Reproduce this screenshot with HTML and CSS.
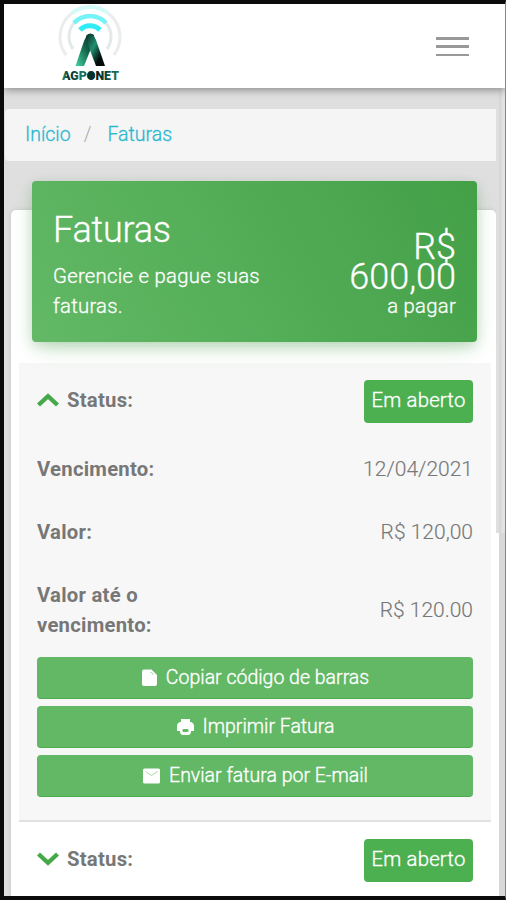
FILE: index.html
```html
<!DOCTYPE html>
<html lang="pt-BR">
<head>
<meta charset="utf-8">
<title>Faturas</title>
<link rel="stylesheet" href="styles.css">
</head>
<body>
<div class="screen">
  <header class="topbar">
    <svg class="logo" width="68" height="78" viewBox="0 0 68 78">
      <defs>
        <linearGradient id="leg" x1="0" y1="1" x2="1" y2="0"><stop offset="0" stop-color="#45d6a5"/><stop offset=".5" stop-color="#166b50"/><stop offset="1" stop-color="#031b16"/></linearGradient>
        <linearGradient id="legDark" x1="0" y1="0" x2="1" y2="1"><stop offset="0" stop-color="#062c25"/><stop offset=".4" stop-color="#238f70"/><stop offset=".75" stop-color="#020b0a"/></linearGradient>
        <linearGradient id="word"><stop offset="0" stop-color="#2aa183"/><stop offset=".15" stop-color="#06231f"/><stop offset=".35" stop-color="#187c65"/><stop offset=".6" stop-color="#041a18"/><stop offset="1" stop-color="#187c65"/></linearGradient>
      </defs>
      <g fill="none" stroke-width="3">
        <path d="M10 51A30 30 0 1 1 58 51" stroke="#eaeded"/>
        <path d="M17 45A21 21 0 1 1 51 45" stroke="#e3e8e8"/>
        <path d="M16 9A30 30 0 0 1 52 9" stroke="#d3fbfa" stroke-width="4"/>
        <path d="M18 19A22 22 0 0 1 50 19" stroke="#76f3f6" stroke-width="4.5"/>
        <path d="M24 26A14 14 0 0 1 44 26" stroke="#30edf5" stroke-width="5"/>
      </g>
      <path d="M28 37L31 31Q34 28 38 31V37L28 62H19.500Z" fill="url(#leg)"/>
      <path d="M30 32Q34 28 38 32L40 36L49 62H40L32 41Z" fill="url(#legDark)"/>
      <text class="wordmark" x="6" y="76" textLength="57" lengthAdjust="spacingAndGlyphs" fill="url(#word)">AGPONET</text>
      <circle cx="35" cy="71.500" r="3.800" fill="#05332c"/>
    </svg>
    <div class="menu"><span></span><span></span><span></span></div>
  </header>
  <div class="body">
    <main class="content">
      <nav class="crumbs"><a>Início</a><i>/</i><a>Faturas</a></nav>
      <section class="card">
        <div class="hero">
          <div class="hero-text"><h1>Faturas</h1><p>Gerencie e pague suas<br>faturas.</p></div>
          <div class="total"><div class="amount">R$<br>600,00</div><p>a pagar</p></div>
        </div>
        <div class="invoice open">
          <div class="row status"><b><svg width="22" height="14" viewBox="0 0 22 14"><path d="M1.500 12L11 3.200L20.500 12"/></svg>Status:</b><span class="badge">Em aberto</span></div>
          <div class="row due"><b>Vencimento:</b><span class="value">12/04/2021</span></div>
          <div class="row"><b>Valor:</b><span class="value">R$ 120,00</span></div>
          <div class="row tall"><b>Valor até o<br>vencimento:</b><span class="value">R$ 120.00</span></div>
          <div class="actions">
            <div class="btn"><svg width="17" height="20" viewBox="0 0 17 20"><path fill="currentColor" d="M3 1.500H10.500L16 7V16Q16 18 14 18H3Q1 18 1 16V3.500Q1 1.500 3 1.500Z"/><path d="M9.500 4.500H11Q12 5 12 7" fill="none" stroke="#a9d9aa"/></svg><span>Copiar código de barras</span></div>
            <div class="btn"><svg width="19" height="20" viewBox="0 0 19 20"><path fill="currentColor" d="M5 2H14V5H5ZM4 5H15Q18 6 18 9V14H15Q15 18 12 18H7Q4 18 4 14H1V9Q1 6 4 5Z"/><rect x="6.500" y="12" width="6" height="3" rx="1" fill="#62b865"/></svg><span>Imprimir Fatura</span></div>
            <div class="btn"><svg width="19" height="20" viewBox="0 0 19 20"><rect x="1" y="2.500" width="17" height="15" rx="1.500" fill="currentColor"/><path d="M3.500 5.500L9.500 9.500L15.500 5.500" fill="none" stroke="#a9d9aa" stroke-width="1"/></svg><span>Enviar fatura por E-mail</span></div>
          </div>
        </div>
        <div class="invoice">
          <div class="row status"><b><svg width="22" height="14" viewBox="0 0 22 14"><path d="M1.500 2L11 10.800L20.500 2"/></svg>Status:</b><span class="badge">Em aberto</span></div>
        </div>
      </section>
    </main>
    <div class="scroll"><div class="thumb"></div></div>
  </div>
</div>
</body>
</html>
```
FILE: styles.css
```css
* { box-sizing: border-box; }
body { margin: 0; font: 300 20.3px/29.5px Roboto, "Liberation Sans", sans-serif; color: #777; }
h1, p { margin: 0; font-weight: inherit; }
.screen { width: 506px; height: 900px; overflow: hidden; display: flex; flex-direction: column; border: solid #0b0b0b; border-width: 4px 1px 4px 4px; border-right-color: #858585; background: #dfdfdf; }
.topbar { position: relative; height: 84px; flex: none; display: flex; justify-content: space-between; align-items: flex-start; padding: 0 36px 0 52px; background: #fff; box-shadow: 0 2px 8px rgba(0,0,0,.38); z-index: 1; }
.logo { display: block; }
.wordmark { font: 900 13px Roboto, sans-serif; }
.menu { display: flex; flex-direction: column; gap: 5.5px; padding-top: 33px; }
.menu span { display: block; width: 33px; height: 2.8px; background: #999; }
.body { display: flex; flex: 1; min-height: 0; }
.content { width: 492px; padding-top: 21px; flex: none; }
.crumbs { display: flex; height: 52px; align-items: center; padding-left: 20px; margin-left: 1px; background: #f5f5f5; border-radius: 4px 0 0 4px; color: #2ab8d0; font-size: 19.5px; }
.crumbs a { -webkit-text-stroke: .3px; }
.crumbs i { margin: 0 16px 0 13px; color: #aaa; font-style: normal; }
.card { margin: 49px 0 0 7px; height: 760px; padding: 0 5px 0 8px; background: #fff; border-radius: 5px 5px 0 0; box-shadow: 0 0 5px rgba(0,0,0,.12); }
.hero { position: relative; top: -29px; display: flex; justify-content: space-between; height: 161px; margin: 0 14px 0 13px; padding: 30px 21px 0; border-radius: 4px; color: #fff; background: linear-gradient(60deg, #63b966, #43a047); box-shadow: 0 8px 20px -4px rgba(76,175,80,.4), 0 3px 12px rgba(0,0,0,.1); -webkit-text-stroke: .3px; }
.hero h1 { font-size: 36px; line-height: 38px; margin-bottom: 13px; letter-spacing: -.2px; }
.hero p { letter-spacing: .28px; }
.total { text-align: right; padding-top: 21px; }
.amount { font-size: 36px; line-height: 30px; }
.invoice { padding: 17px 18px 0; }
.invoice.open { height: 459px; margin-top: -8px; background: #f7f7f7; border-bottom: 2px solid #e1e1e1; }
.row { display: flex; justify-content: space-between; align-items: center; height: 63px; }
.row b { font-weight: 700; color: #777; letter-spacing: .25px; }
.row svg { margin-right: 8px; }
.row path { fill: none; stroke: #45a94a; stroke-width: 4.4; }
.value { font-size: 21px; -webkit-text-stroke: .15px; padding-top: 1px; }
.status { height: 43px; }
.status b { padding-bottom: 2px; }
.due { margin-top: 15px; }
.tall { height: 93px; }
.badge { height: 43px; width: 109px; padding-top: 6px; text-align: center; background: #4caf50; color: #fff; border-radius: 4px; letter-spacing: .2px; -webkit-text-stroke: .35px; }
.actions { display: grid; gap: 7px; }
.btn { display: flex; height: 42px; align-items: center; justify-content: center; gap: 8px; border-radius: 4px; background: #62b865; color: #fff; font-size: 19.5px; border-bottom: 1px solid #4bad50; }
.btn span { -webkit-text-stroke: .35px; padding-top: 1px; }
.scroll { width: 9px; background: linear-gradient(90deg, #fff 3px, #d8d8d8 3px); }
.thumb { height: 445px; background: linear-gradient(90deg, #dfdfdf 2px, #d6d6d6 4px, #e3e3e3 7px); }
```
